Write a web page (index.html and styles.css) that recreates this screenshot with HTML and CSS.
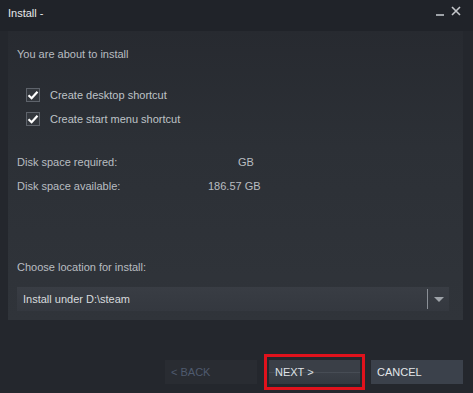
FILE: index.html
```html
<!DOCTYPE html>
<html lang="en">
<head>
  <meta charset="UTF-8" />
  <title>Install -</title>
  <link rel="stylesheet" href="styles.css">
</head>
<body>
  <div class="window">
    <header class="titlebar">
      <span class="title">Install -</span>
      <div class="controls">
        <span class="min"></span>
        <svg class="close" width="10" height="10" viewBox="0 0 10 10">
          <path d="M1 1L9 9M9 1L1 9" stroke="#c4c7cb" stroke-width="1.6" />
        </svg>
      </div>
    </header>

    <main class="panel">
      <p class="intro">You are about to install</p>

      <div class="options">
        <label class="check"><span class="box"><svg width="12" height="10" viewBox="0 0 12 10"><path d="M1.5 5.2L4.6 8.2L10.5 1.8" fill="none" stroke="#fff" stroke-width="2.2" /></svg></span>Create desktop shortcut</label>
        <label class="check"><span class="box"><svg width="12" height="10" viewBox="0 0 12 10"><path d="M1.5 5.2L4.6 8.2L10.5 1.8" fill="none" stroke="#fff" stroke-width="2.2" /></svg></span>Create start menu shortcut</label>
      </div>

      <div class="disk">
        <div class="row"><span class="label">Disk space required:</span><span class="value req">GB</span></div>
        <div class="row"><span class="label">Disk space available:</span><span class="value">186.57 GB</span></div>
      </div>

      <p class="choose">Choose location for install:</p>
      <div class="select">
        <span class="sel-text">Install under D:\steam</span>
        <span class="sel-sep"></span>
        <span class="sel-arrow"></span>
      </div>
    </main>

    <footer class="buttons">
      <button class="btn back">&lt; BACK</button>
      <div class="highlight"><button class="btn next">NEXT &gt;</button></div>
      <button class="btn cancel">CANCEL</button>
    </footer>
  </div>
</body>
</html>
```

FILE: styles.css
```css
html, body {
  margin: 0;
  padding: 0;
  width: 473px;
  height: 393px;
  overflow: hidden;
  background: #24272d;
  font-family: "Liberation Sans", Arial, sans-serif;
  font-size: 11px;
  color: #b9bdc1;
}

.window {
  display: flex;
  flex-direction: column;
  height: 393px;
}

/* Title bar */
.titlebar {
  height: 31px;
  background: #202329;
  display: flex;
  align-items: center;
  justify-content: space-between;
  padding: 0 12px 0 8px;
}
.title {
  color: #e8eaec;
  font-size: 11px;
  margin-top: -5px;
}
.controls {
  display: flex;
  align-items: center;
  gap: 7px;
  margin-top: -9px;
}
.min {
  width: 8px;
  height: 2px;
  background: #9ea2a7;
  margin-top: 8px;
}

/* Main panel */
.panel {
  margin: 0 10px 0 8px;
  height: 289px;
  background: linear-gradient(180deg, #272a30 0%, #2c3036 40%, #30343a 100%);
  padding: 0 14px 0 9px;
  box-sizing: border-box;
}
.intro {
  margin: 0;
  padding-top: 16px;
  line-height: 14px;
  height: 14px;
  color: #b9bdc1;
}

.options {
  margin-top: 27px;
  display: flex;
  flex-direction: column;
  gap: 10px;
  padding-left: 9px;
}
.check {
  display: flex;
  align-items: center;
  height: 14px;
  color: #bfc3c7;
}
.box {
  width: 12px;
  height: 12px;
  border: 1px solid #5e636b;
  background: #33373d;
  display: flex;
  align-items: center;
  justify-content: center;
  margin-right: 10px;
}

.disk {
  margin-top: 29px;
  display: flex;
  flex-direction: column;
  gap: 10px;
}
.row {
  display: flex;
  height: 14px;
  line-height: 14px;
}
.label {
  width: 191px;
}
.value {
  color: #b9bdc1;
}
.value.req {
  padding-left: 30px;
}

.choose {
  margin: 67px 0 0;
  line-height: 14px;
}
.select {
  margin-top: 13px;
  height: 24px;
  background: linear-gradient(180deg, #393d44 0%, #34383f 100%);
  display: flex;
  align-items: center;
  padding-left: 6px;
}
.sel-text {
  flex: 1;
  color: #d7dadd;
}
.sel-sep {
  width: 1px;
  height: 20px;
  background: #8b9097;
}
.sel-arrow {
  width: 0;
  height: 0;
  border-left: 5px solid transparent;
  border-right: 5px solid transparent;
  border-top: 5px solid #9ea3a9;
  margin: 0 5px 0 6px;
}

/* Footer buttons */
.buttons {
  flex: 1;
  display: flex;
  align-items: flex-start;
  justify-content: flex-end;
  padding: 34px 10px 0 0;
}
.btn {
  width: 92px;
  height: 24px;
  border: none;
  font-family: inherit;
  font-size: 11px;
  text-align: left;
  padding: 0 6px;
}
.back {
  margin-top: 6px;
  background: #292c32;
  color: #4f5a6e;
}
.highlight {
  border: 3px solid #e0121c;
  padding: 3px 2px 3px 2px;
  margin: 0 6px 0 7px;
}
.next {
  width: 91px;
  color: #dfe2e6;
  background: linear-gradient(180deg, #3a3f47 0%, #3a3f47 48%, #555b64 50%, #3a3f47 54%, #353a41 100%);
}
.cancel {
  margin-top: 6px;
  background: #3b414b;
  color: #e3e6e9;
}
```
